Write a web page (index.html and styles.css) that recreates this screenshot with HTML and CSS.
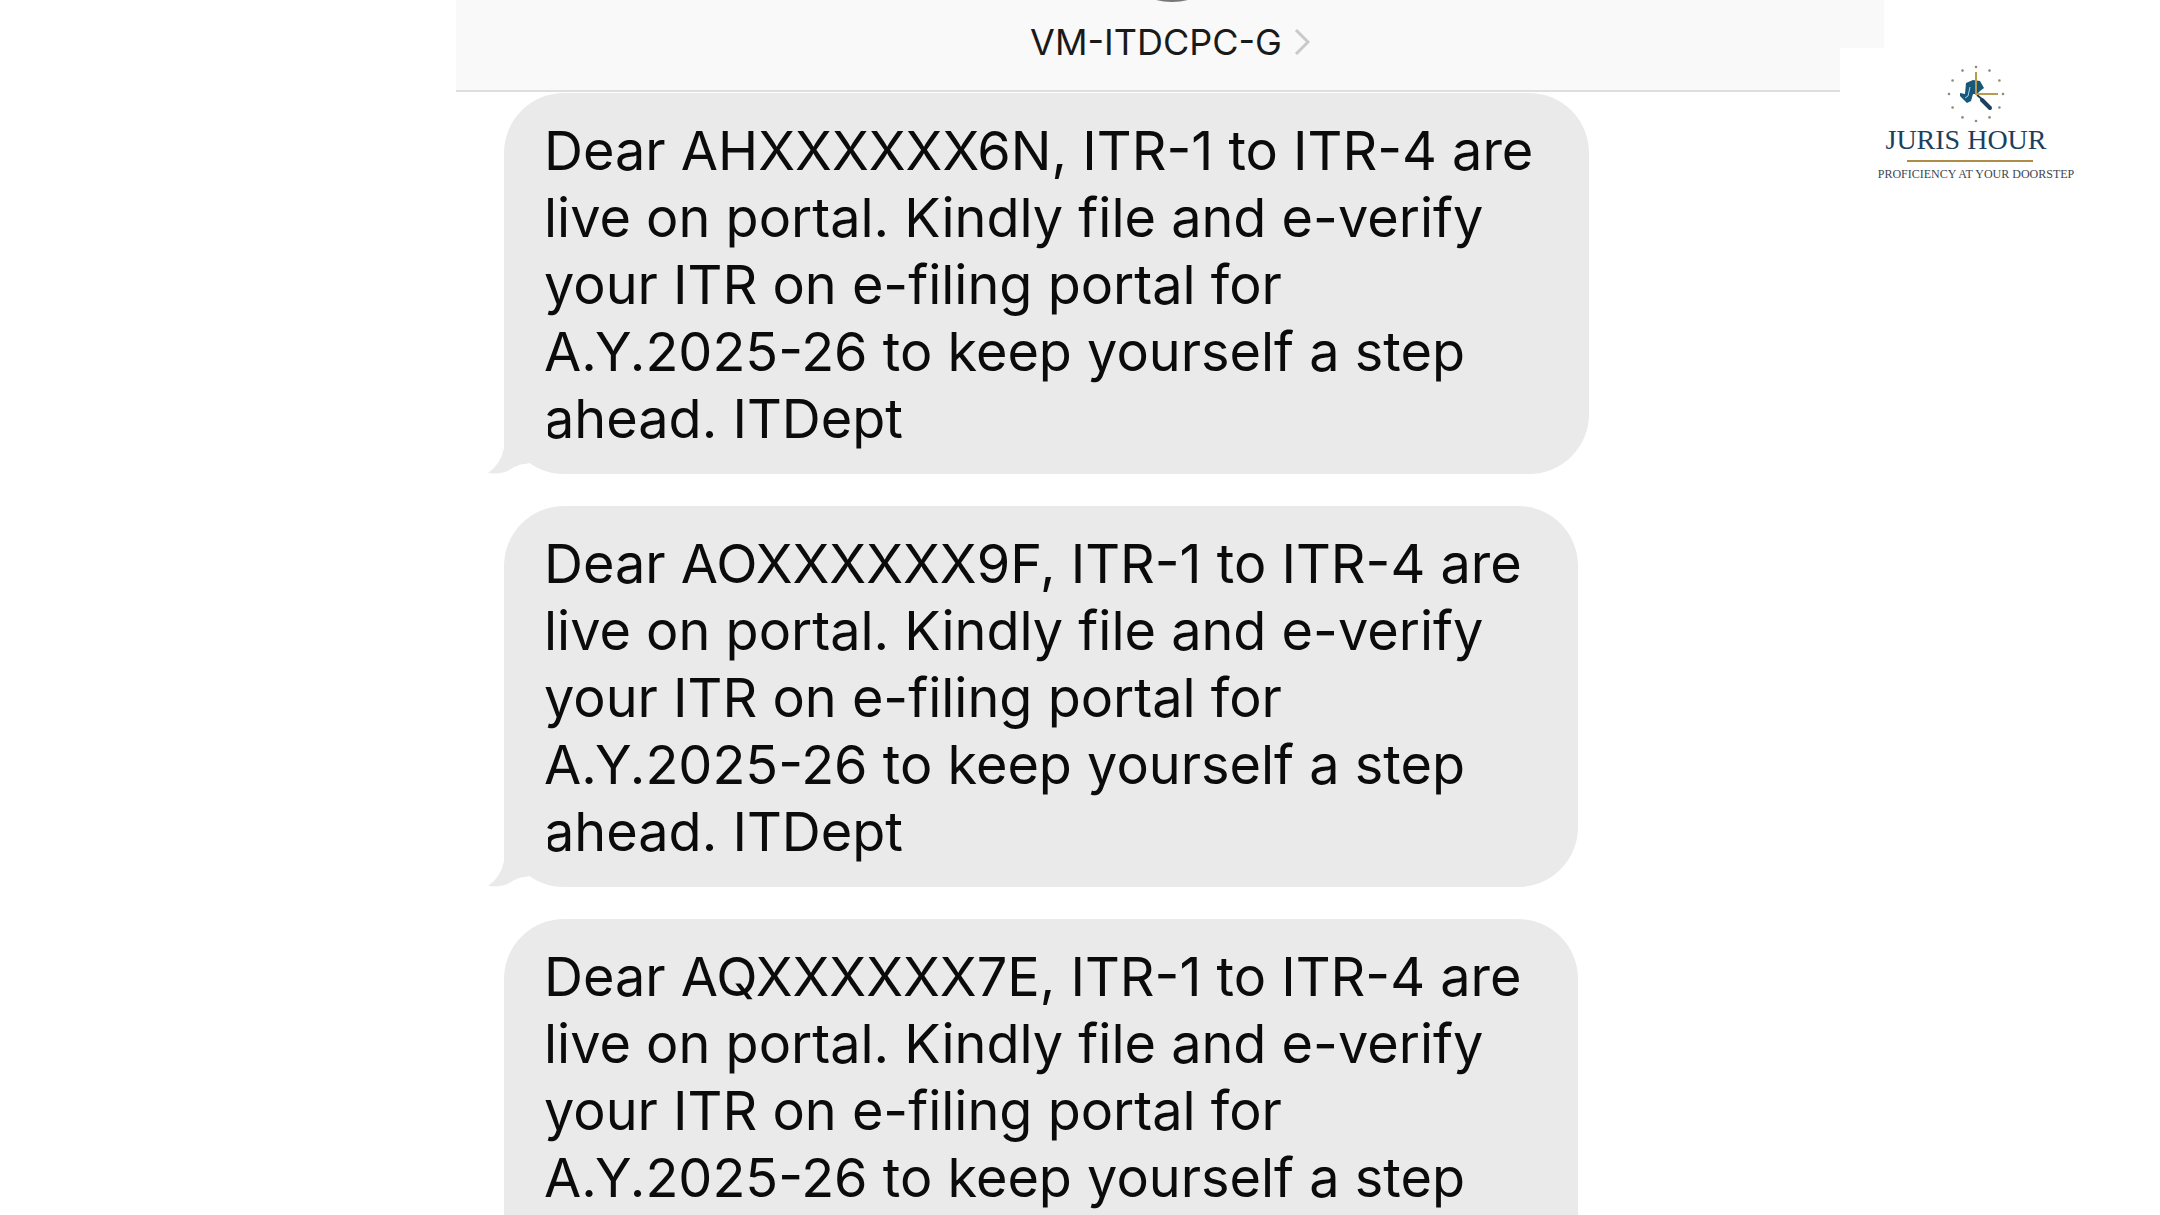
FILE: index.html
```
<!DOCTYPE html>
<html lang="en">

<head>
  <meta charset="UTF-8" />
  <meta name="viewport" content="width=device-width, initial-scale=1.0" />
  <title>VM-ITDCPC-G</title>
  <link rel="stylesheet" href="styles.css">
</head>

<body>
  <div class="page">
    <main class="phone">
      <header class="chat-header">
        <span class="avatar"></span>
        <button class="contact" type="button">
          <span>VM-ITDCPC-G</span>
          <svg class="chevron" viewBox="0 0 16 28" aria-hidden="true">
            <path d="M2 2 L14 14 L2 26" />
          </svg>
        </button>
      </header>

      <section class="messages">
        <p class="bubble">
          Dear AHXXXXXX6N, ITR-1 to ITR-4 are<br>
          live on portal. Kindly file and e-verify<br>
          your ITR on e-filing portal for<br>
          A.Y.2025-26 to keep yourself a step<br>
          ahead. ITDept
          <svg class="tail" viewBox="0 0 60 56" aria-hidden="true">
            <path class="tail-fill" d="M16 0 V30 Q13 46 0 55 Q16 57 26 49 L60 40 V0 Z" />
            <path class="tail-cut" d="M22 56 Q27 46 36 46 Q46 54 60 56 Z" />
          </svg>
        </p>
        <p class="bubble">
          Dear AOXXXXXX9F, ITR-1 to ITR-4 are<br>
          live on portal. Kindly file and e-verify<br>
          your ITR on e-filing portal for<br>
          A.Y.2025-26 to keep yourself a step<br>
          ahead. ITDept
          <svg class="tail" viewBox="0 0 60 56" aria-hidden="true">
            <path class="tail-fill" d="M16 0 V30 Q13 46 0 55 Q16 57 26 49 L60 40 V0 Z" />
            <path class="tail-cut" d="M22 56 Q27 46 36 46 Q46 54 60 56 Z" />
          </svg>
        </p>
        <p class="bubble bubble-open">
          Dear AQXXXXXX7E, ITR-1 to ITR-4 are<br>
          live on portal. Kindly file and e-verify<br>
          your ITR on e-filing portal for<br>
          A.Y.2025-26 to keep yourself a step
        </p>
      </section>
    </main>
  </div>

  <aside class="brand">
    <svg class="brand-mark" viewBox="0 0 60 60" aria-hidden="true">
      <g class="ticks">
        <circle cx="30" cy="3" r="1.3" />
        <circle cx="43.5" cy="6.6" r="1.3" />
        <circle cx="53.4" cy="16.5" r="1.3" />
        <circle cx="57" cy="30" r="1.3" />
        <circle cx="53.4" cy="43.5" r="1.3" />
        <circle cx="43.5" cy="53.4" r="1.3" />
        <circle cx="30" cy="57" r="1.3" />
        <circle cx="16.5" cy="53.4" r="1.3" />
        <circle cx="6.6" cy="43.5" r="1.3" />
        <circle cx="3" cy="30" r="1.3" />
        <circle cx="6.6" cy="16.5" r="1.3" />
        <circle cx="16.5" cy="6.6" r="1.3" />
      </g>
      <path class="gavel" d="M20 19 L27 16 L34 17 L38 24 L34 27 L31 30 L27 30 L25 37 L21 39 L14 32 L14 29 L19 30 Z" />
      <path class="gavel-gap" d="M24 23 L22 32 L19 34" />
      <path class="gavel-handle" d="M31 31 L37 36" />
      <path class="gavel-grip" d="M36 36 L44 44" />
      <path class="hands" d="M30 8 V30 H52" />
    </svg>
    <div class="brand-name">JURIS HOUR</div>
    <hr class="brand-rule">
    <div class="brand-tagline">PROFICIENCY AT YOUR DOORSTEP</div>
  </aside>
</body>

</html>
```
FILE: styles.css
```
:root {
  --bubble: #eaeaea;
  --header-bg: #f9f9f9;
  --line: #dedede;
  --gold: #ad8c45;
  --navy: #1d3f5e;
}

* {
  box-sizing: border-box;
}

body {
  margin: 0;
  position: relative;
  height: 100vh;
  overflow: hidden;
  background: #fff;
  color: #0b0b0b;
  font-family: Inter, "Liberation Sans", sans-serif;
}

.page {
  display: grid;
  grid-template-columns: 38fr 119fr 23fr;
}

.phone {
  grid-column: 2;
  min-width: 0;
}

.chat-header {
  position: relative;
  display: flex;
  justify-content: center;
  padding: 20px 0 26px;
  background: var(--header-bg);
  border-bottom: 2px solid var(--line);
}

/* only the lower edge of the photo is on screen */
.avatar {
  position: absolute;
  left: 50%;
  bottom: 100%;
  width: 130px;
  height: 130px;
  margin: 0 0 -2px -63px;
  border-radius: 50%;
  background: #77777a;
}

.contact {
  display: flex;
  align-items: center;
  gap: 12px;
  padding: 0;
  border: none;
  background: none;
  color: #1a1a1a;
  font-family: inherit;
  font-size: 36px;
  line-height: 44px;
  cursor: pointer;
}

.chevron {
  width: 16px;
  height: 28px;
  fill: none;
  stroke: #c9c9c9;
  stroke-width: 3;
}

.messages {
  display: flex;
  flex-direction: column;
  align-items: flex-start;
  gap: 32px;
  padding: 1px 48px 0;
}

.bubble {
  position: relative;
  margin: 0;
  padding: 24px 56px 22px 40px;
  border-radius: 60px;
  background: var(--bubble);
  font-size: 54px;
  line-height: 67px;
  white-space: nowrap;
}

/* runs on below the fold */
.bubble-open {
  border-radius: 60px 60px 0 0;
}

.tail {
  position: absolute;
  left: -16px;
  bottom: 0;
  width: 60px;
  height: 56px;
}

.tail-fill {
  fill: var(--bubble);
}

.tail-cut {
  fill: #fff;
}

.brand {
  position: absolute;
  top: 48px;
  right: 0;
  width: 320px;
  padding: 16px 48px 24px 0;
  display: flex;
  flex-direction: column;
  align-items: center;
  background: #fff;
  font-family: "Liberation Serif", serif;
}

.brand-mark {
  width: 60px;
  height: 60px;
}

.ticks {
  fill: #8f8a74;
}

.gavel {
  fill: #17577a;
}

.gavel-gap {
  fill: none;
  stroke: #a9d3e6;
  stroke-width: 1;
}

.gavel-handle {
  stroke: var(--navy);
  stroke-width: 2;
}

.gavel-grip {
  stroke: var(--navy);
  stroke-width: 4;
  stroke-linecap: round;
}

.hands {
  fill: none;
  stroke: #b89b50;
  stroke-width: 2;
}

.brand-name {
  padding-right: 20px;
  color: var(--navy);
  font-size: 28px;
  line-height: 32px;
  white-space: nowrap;
}

.brand-rule {
  width: 126px;
  margin: 4px 12px 4px 0;
  border: none;
  border-top: 2px solid var(--gold);
}

.brand-tagline {
  color: #3c4650;
  font-size: 12px;
  line-height: 16px;
  white-space: nowrap;
}
```
